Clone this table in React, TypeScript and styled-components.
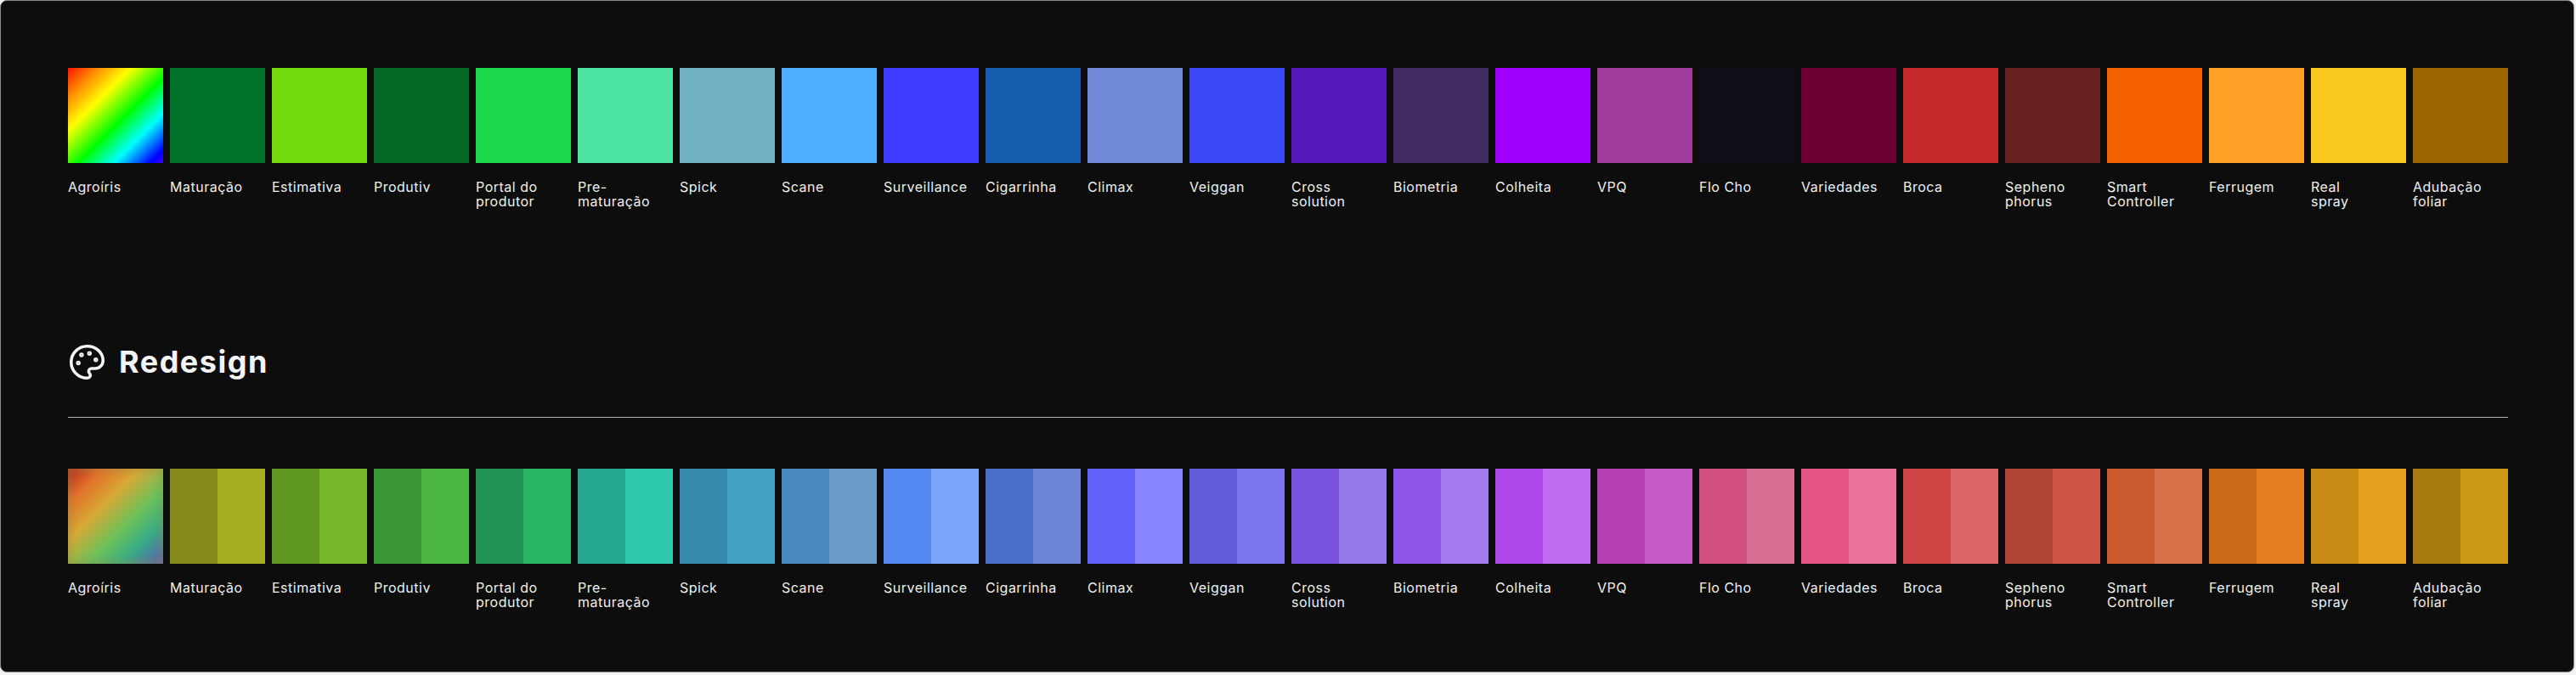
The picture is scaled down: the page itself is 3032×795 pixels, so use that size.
import React from "react";
import styled, { createGlobalStyle } from "styled-components";
import { Palette } from "lucide-react";

const GlobalStyle = createGlobalStyle`
  html, body {
    margin: 0;
    padding: 0;
    background: #f2f2f2;
  }
  * {
    box-sizing: border-box;
  }
`;

type Item = {
  name: string;
  legacy: string;
  redesign: string[] | string;
};

const items: Item[] = [
  {
    name: "Agroíris",
    legacy:
      "linear-gradient(135deg, #ff1500 0%, #ff8c00 16%, #ffff00 33%, #00ff00 55%, #00ffff 74%, #0000ff 93%, #3a00ff 100%)",
    redesign:
      "linear-gradient(135deg, #b52218 0%, #e2702a 18%, #d6aa34 38%, #6cc25a 60%, #38ac84 78%, #5a5ab8 100%)",
  },
  { name: "Maturação", legacy: "#00722a", redesign: ["#868a1a", "#a6af22"] },
  { name: "Estimativa", legacy: "#72d90c", redesign: ["#609822", "#76b82a"] },
  { name: "Produtiv", legacy: "#066826", redesign: ["#3a9636", "#4ab540"] },
  { name: "Portal do\nprodutor", legacy: "#1bd84b", redesign: ["#219454", "#29b664"] },
  { name: "Pre-\nmaturação", legacy: "#4de3a3", redesign: ["#25a78e", "#2dc8ab"] },
  { name: "Spick", legacy: "#6fb1c2", redesign: ["#3789ab", "#46a2c5"] },
  { name: "Scane", legacy: "#4fadff", redesign: ["#4a89bd", "#6a9dc9"] },
  { name: "Surveillance", legacy: "#3e3bff", redesign: ["#5288f0", "#79a4f8"] },
  { name: "Cigarrinha", legacy: "#165db0", redesign: ["#4a6ccb", "#6b85d5"] },
  { name: "Climax", legacy: "#728ad8", redesign: ["#6160fa", "#8785ff"] },
  { name: "Veiggan", legacy: "#3a47f5", redesign: ["#615bd9", "#7c74ed"] },
  { name: "Cross\nsolution", legacy: "#5518b8", redesign: ["#7851dd", "#9378e7"] },
  { name: "Biometria", legacy: "#402b62", redesign: ["#8e55eb", "#a57bf0"] },
  { name: "Colheita", legacy: "#a100fe", redesign: ["#ae48ea", "#bf6cf0"] },
  { name: "VPQ", legacy: "#a23d9c", redesign: ["#b540b2", "#c65ac5"] },
  { name: "Flo Cho", legacy: "#0f0f17", redesign: ["#d04f80", "#d87095"] },
  { name: "Variedades", legacy: "#6b0032", redesign: ["#e35385", "#ea739c"] },
  { name: "Broca", legacy: "#c5292b", redesign: ["#d04545", "#db6565"] },
  { name: "Sepheno\nphorus", legacy: "#672220", redesign: ["#b04435", "#cc5444"] },
  { name: "Smart\nController", legacy: "#f66200", redesign: ["#cb592e", "#d8704a"] },
  { name: "Ferrugem", legacy: "#ffa027", redesign: ["#cb6a16", "#e67e22"] },
  { name: "Real\nspray", legacy: "#fbc820", redesign: ["#c98a16", "#e3a11d"] },
  { name: "Adubação\nfoliar", legacy: "#9b6600", redesign: ["#a67c10", "#ca9717"] },
];

const App = () => {
  return (
    <>
      <GlobalStyle />
      <Frame>
        <SwatchGrid>
          {items.map((item) => (
            <SwatchCell key={item.name}>
              <Swatch $bg={item.legacy} />
              <SwatchLabel>{item.name}</SwatchLabel>
            </SwatchCell>
          ))}
        </SwatchGrid>

        <SectionHeader>
          <Palette size={45} strokeWidth={1.9} />
          <SectionTitle>Redesign</SectionTitle>
        </SectionHeader>
        <Divider />

        <SwatchGrid>
          {items.map((item) => (
            <SwatchCell key={item.name}>
              {Array.isArray(item.redesign) ? (
                <Swatch>
                  {item.redesign.map((c) => (
                    <Half key={c} $color={c} />
                  ))}
                </Swatch>
              ) : (
                <Swatch $bg={item.redesign} $soft />
              )}
              <SwatchLabel>{item.name}</SwatchLabel>
            </SwatchCell>
          ))}
        </SwatchGrid>
      </Frame>
    </>
  );
};

export default App;

const Frame = styled.div`
  width: 3030px;
  height: 792px;
  background: #0d0d0d;
  border: 1px solid #8c8c8c;
  border-radius: 8px;
  padding: 79px 77px 0 79px;
  font-family: "Inter", "Liberation Sans", sans-serif;
  color: #f0f0f0;
`;

const SwatchGrid = styled.div`
  display: grid;
  grid-template-columns: repeat(24, 112px);
  column-gap: 8px;
`;

const SwatchCell = styled.div`
  display: flex;
  flex-direction: column;
`;

const Swatch = styled.div<{ $bg?: string; $soft?: boolean }>`
  display: flex;
  width: 112px;
  height: 112px;
  background: ${(p) => p.$bg || "transparent"};
  box-shadow: ${(p) =>
    p.$soft ? "inset 0 0 10px 3px rgba(150, 140, 70, 0.45)" : "none"};
`;

const Half = styled.div<{ $color: string }>`
  flex: 1;
  background: ${(p) => p.$color};
`;

const SwatchLabel = styled.div`
  margin-top: 20px;
  height: 34px;
  font-size: 16px;
  line-height: 17px;
  letter-spacing: 0.5px;
  white-space: pre-line;
`;

const SectionHeader = styled.div`
  display: flex;
  align-items: center;
  gap: 15px;
  margin-top: 158px;
  height: 44px;
  color: #f4f4f4;
`;

const SectionTitle = styled.h2`
  margin: 0;
  font-size: 36px;
  line-height: 44px;
  font-weight: 700;
  letter-spacing: 1.5px;
`;

const Divider = styled.hr`
  margin: 43px 0 60px;
  border: none;
  height: 1px;
  background: #b0b0b0;
`;
